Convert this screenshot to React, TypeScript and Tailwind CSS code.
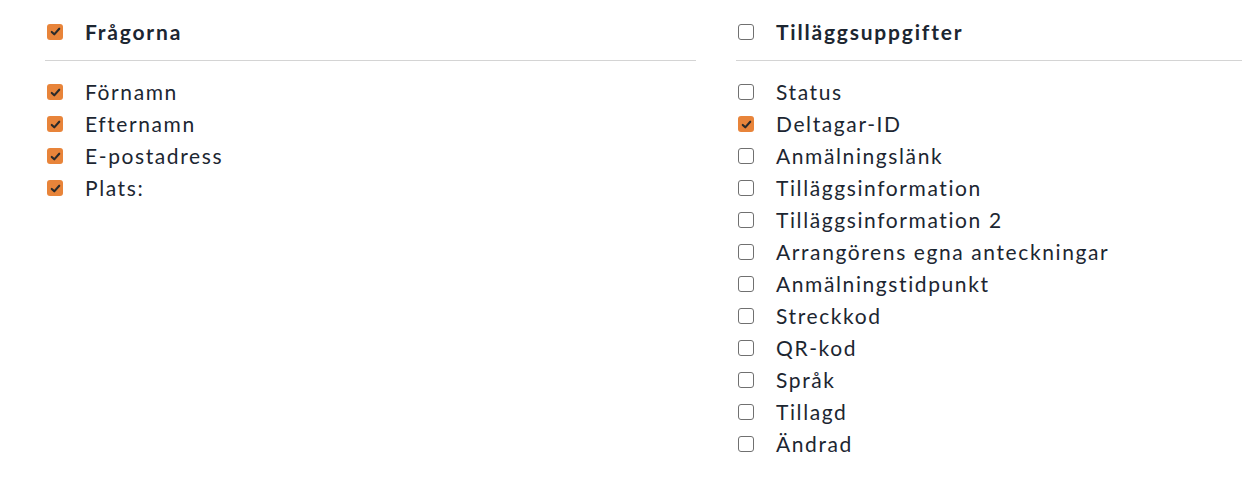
import { useState } from "react";

interface Field {
  label: string;
  checked: boolean;
}

const questions: Field[] = [
  { label: "Förnamn", checked: true },
  { label: "Efternamn", checked: true },
  { label: "E-postadress", checked: true },
  { label: "Plats:", checked: true },
];

const extras: Field[] = [
  { label: "Status", checked: false },
  { label: "Deltagar-ID", checked: true },
  { label: "Anmälningslänk", checked: false },
  { label: "Tilläggsinformation", checked: false },
  { label: "Tilläggsinformation 2", checked: false },
  { label: "Arrangörens egna anteckningar", checked: false },
  { label: "Anmälningstidpunkt", checked: false },
  { label: "Streckkod", checked: false },
  { label: "QR-kod", checked: false },
  { label: "Språk", checked: false },
  { label: "Tillagd", checked: false },
  { label: "Ändrad", checked: false },
];

function Box({ checked, onClick }: { checked: boolean; onClick: () => void }) {
  return (
    <button
      onClick={onClick}
      className={`w-[16px] h-[16px] shrink-0 rounded-[3px] flex items-center justify-center ${
        checked ? "bg-[#e8843a]" : "bg-white border border-[#707070]"
      }`}
    >
      {checked && (
        <svg viewBox="0 0 16 16" className="w-[13px] h-[13px]">
          <path
            d="M3.4 8.6 L6.5 11.5 L12.6 4.6"
            fill="none"
            stroke="#2b2b2b"
            strokeWidth="2.6"
            strokeLinecap="round"
            strokeLinejoin="round"
          />
        </svg>
      )}
    </button>
  );
}

function Column({ title, initial }: { title: string; initial: Field[] }) {
  const [items, setItems] = useState(initial);
  const all = items.every((i) => i.checked);

  const toggle = (idx: number) =>
    setItems(items.map((it, i) => (i === idx ? { ...it, checked: !it.checked } : it)));

  const toggleAll = () => setItems(items.map((it) => ({ ...it, checked: !all })));

  return (
    <div className="w-[651px] shrink-0">
      <div className="h-[61px] flex items-center gap-[22px] pl-[2px] pt-[3px] border-b border-[#d4d4d4]">
        <Box checked={all} onClick={toggleAll} />
        <span className="text-[21px] font-bold tracking-[1.8px] text-[#1c2631]">{title}</span>
      </div>
      <ul className="pt-[15px]">
        {items.map((it, i) => (
          <li key={it.label} className="h-[32px] flex items-center gap-[22px] pl-[2px]">
            <Box checked={it.checked} onClick={() => toggle(i)} />
            <span className="text-[21px] tracking-[1.6px] text-[#1c2631]">{it.label}</span>
          </li>
        ))}
      </ul>
    </div>
  );
}

export default function App() {
  return (
    <div
      className="w-[1242px] h-[478px] overflow-hidden bg-white"
      style={{ fontFamily: "Lato, 'Noto Sans', sans-serif" }}
    >
      <div className="flex gap-[40px] pl-[45px]">
        <Column title="Frågorna" initial={questions} />
        <Column title="Tilläggsuppgifter" initial={extras} />
      </div>
    </div>
  );
}
